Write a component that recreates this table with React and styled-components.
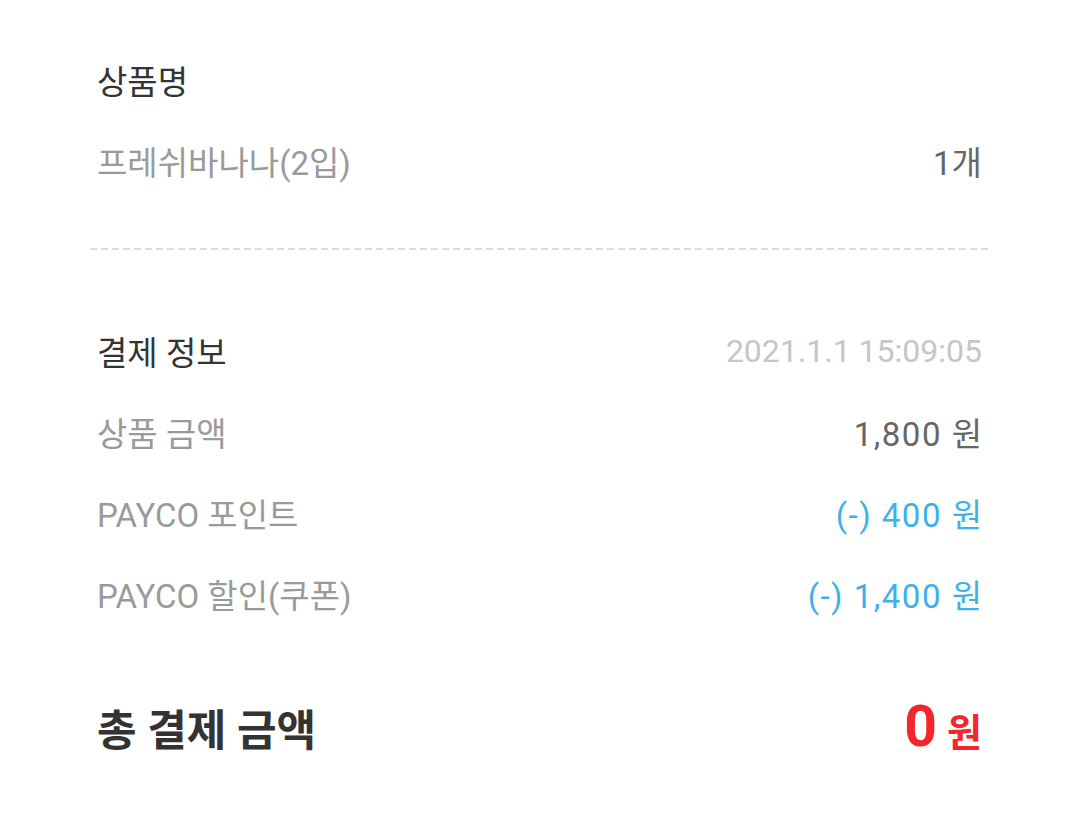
import styled, { createGlobalStyle } from 'styled-components';

const GlobalStyle = createGlobalStyle`
  body {
    margin: 0;
    background: #fff;
    font-family: Roboto, "Noto Sans CJK KR", sans-serif;
  }
`

const Page = styled.div`
  padding: 39px 96px 0 97px;
`

const Row = styled.div`
  display: flex;
  align-items: center;
  justify-content: space-between;
  height: 81px;
  font-size: 33px;
`

const Heading = styled.span`
  color: #333;
`

const Label = styled.span`
  color: #9a9a9a;
`

const Value = styled.span`
  color: ${(props) => props.color || '#666'};
  letter-spacing: ${(props) => (props.wide ? '1.5px' : '0')};
  margin-right: ${(props) => (props.wide ? '-1.5px' : '0')};
`

const DateText = styled.span`
  color: #c6c6c6;
  font-size: 32px;
`

const Divider = styled.div`
  height: 2px;
  margin: 47px -8px 60px -7px;
  background: repeating-linear-gradient(to right, #dcdcdc 0 7px, transparent 7px 11px);
`

const TotalRow = styled(Row)`
  margin-top: 52px;
  font-weight: bold;
`

const TotalLabel = styled.span`
  color: #333;
  font-size: 43px;
`

const TotalValue = styled.span`
  color: #f2262c;
  display: flex;
  align-items: baseline;
  gap: 10px;
`

const Amount = styled.span`
  font-size: 57px;
`

const Won = styled.span`
  font-size: 38px;
`

const items = [
  { label: '상품 금액', value: '1,800 원' },
  { label: 'PAYCO 포인트', value: '(-) 400 원', color: '#3db1e9' },
  { label: 'PAYCO 할인(쿠폰)', value: '(-) 1,400 원', color: '#3db1e9' },
]

const App = () => (
  <Page>
    <GlobalStyle />
    <Row>
      <Heading>상품명</Heading>
    </Row>
    <Row>
      <Label>프레쉬바나나(2입)</Label>
      <Value>1개</Value>
    </Row>

    <Divider />

    <Row>
      <Heading>결제 정보</Heading>
      <DateText>2021.1.1 15:09:05</DateText>
    </Row>
    {items.map((item) => (
      <Row key={item.label}>
        <Label>{item.label}</Label>
        <Value wide color={item.color}>{item.value}</Value>
      </Row>
    ))}

    <TotalRow>
      <TotalLabel>총 결제 금액</TotalLabel>
      <TotalValue>
        <Amount>0</Amount>
        <Won>원</Won>
      </TotalValue>
    </TotalRow>
  </Page>
)

export default App;
